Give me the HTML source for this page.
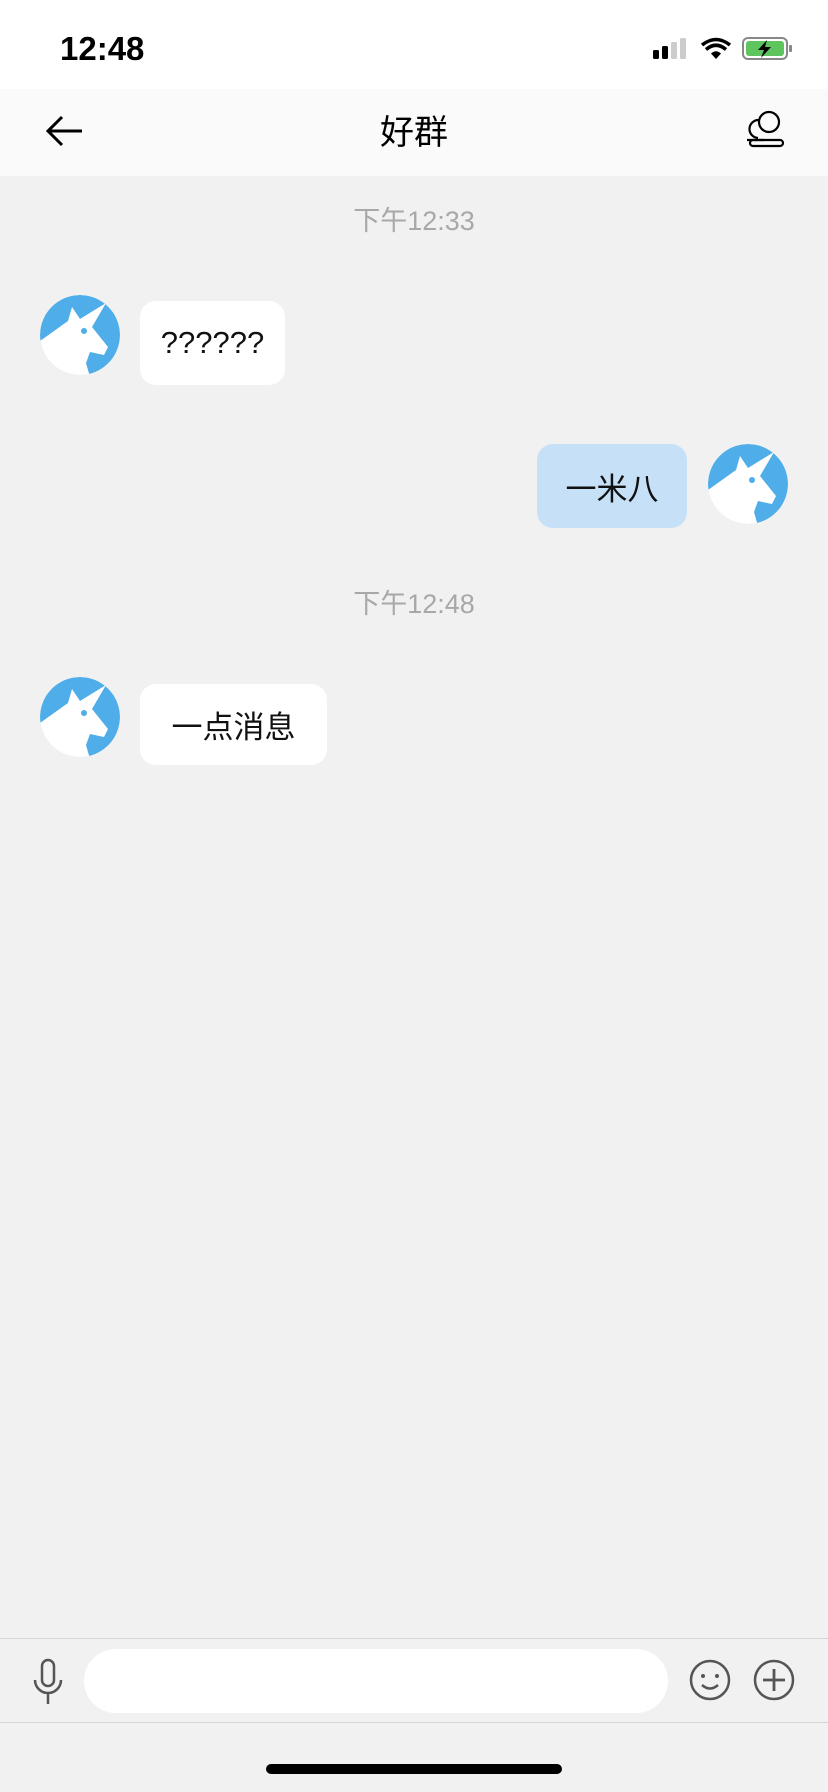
<!DOCTYPE html>
<html><head><meta charset="utf-8"><style>
*{margin:0;padding:0;box-sizing:border-box}
body{width:828px;height:1792px;background:#f1f1f1;font-family:"Liberation Sans","Noto Sans CJK SC",sans-serif;position:relative;overflow:hidden}
.abs{position:absolute}
.status{left:0;top:0;width:828px;height:89px;background:#fff}
.hdr{left:0;top:89px;width:828px;height:87px;background:#fafafa}
.ts{width:828px;text-align:center;color:#a8a8a8;font-size:27px;left:0}
.bub{border-radius:16px;background:#fff;font-size:31px;color:#111;display:flex;align-items:center;justify-content:center}
.av{width:80px;height:80px}
</style></head><body>
<div class="abs status"></div>
<div class="abs" style="left:60px;top:30px;font-size:33px;font-weight:bold;color:#000">12:48</div>
<svg class="abs" style="left:650px;top:36px" width="150" height="26" viewBox="0 0 150 26">
<rect x="3" y="14" width="6" height="9" rx="1.5" fill="#000"/><rect x="12" y="10" width="6" height="13" rx="1.5" fill="#000"/><rect x="21" y="6" width="6" height="17" rx="1.5" fill="#ccc"/><rect x="30" y="2" width="6" height="21" rx="1.5" fill="#ccc"/>
<path d="M52 9 Q66 -2 80 9" stroke="#000" stroke-width="3.5" fill="none"/><path d="M56 13.5 Q66 5 76 13.5" stroke="#000" stroke-width="3.5" fill="none"/><path d="M61 17.5 L66 23 L71 17.5 Q66 13 61 17.5Z" fill="#000"/>
<rect x="93" y="2" width="44" height="21" rx="5" fill="none" stroke="#888" stroke-width="2"/><rect x="96" y="5" width="38" height="15" rx="3" fill="#5ec45e"/><rect x="139" y="9" width="3" height="7" rx="1" fill="#888"/>
<path d="M117 4 L108 14 L114 14 L111 22 L121 11 L115 11Z" fill="#000"/>
</svg>
<div class="abs hdr"></div>
<svg class="abs" style="left:44px;top:114px" width="40" height="34" viewBox="0 0 40 34"><path d="M38 17 H4 M18 3 L4 17 L18 31" stroke="#000" stroke-width="3" fill="none"/></svg>
<div class="abs" style="left:0;width:828px;text-align:center;top:105px;font-size:34px;color:#000">好群</div>
<svg class="abs" style="left:744px;top:110px" width="42" height="42" viewBox="0 0 42 42"><circle cx="25" cy="12" r="10" fill="none" stroke="#000" stroke-width="2.2"/><path d="M15 10 A9 9 0 0 0 14 28" fill="none" stroke="#000" stroke-width="2.2"/><rect x="6" y="30" width="33" height="6" rx="3" fill="none" stroke="#000" stroke-width="2.2"/><path d="M3 30 H20" stroke="#000" stroke-width="2.2"/></svg>

<div class="abs ts" style="top:199px">下午12:33</div>
<svg class="abs av" style="left:40px;top:295px" viewBox="0 0 80 80"><defs><clipPath id="c"><circle cx="40" cy="40" r="40"/></clipPath></defs><g clip-path="url(#c)"><circle cx="40" cy="40" r="40" fill="#4faee9"/><path d="M0 46 L28 26 L32 12 L40 24 L66 8 L52 32 L68 52 L64 60 L50 57 L46 68 L50 82 L0 82Z" fill="#fff"/><circle cx="44" cy="36" r="3" fill="#4faee9"/></g></svg>
<div class="abs bub" style="left:140px;top:301px;width:145px;height:84px">??????</div>

<div class="abs bub" style="left:537px;top:444px;width:150px;height:84px;background:#c6e0f7">一米八</div>
<svg class="abs av" style="left:708px;top:444px" viewBox="0 0 80 80"><g clip-path="url(#c)"><circle cx="40" cy="40" r="40" fill="#4faee9"/><path d="M0 46 L28 26 L32 12 L40 24 L66 8 L52 32 L68 52 L64 60 L50 57 L46 68 L50 82 L0 82Z" fill="#fff"/><circle cx="44" cy="36" r="3" fill="#4faee9"/></g></svg>

<div class="abs ts" style="top:582px">下午12:48</div>
<svg class="abs av" style="left:40px;top:677px" viewBox="0 0 80 80"><g clip-path="url(#c)"><circle cx="40" cy="40" r="40" fill="#4faee9"/><path d="M0 46 L28 26 L32 12 L40 24 L66 8 L52 32 L68 52 L64 60 L50 57 L46 68 L50 82 L0 82Z" fill="#fff"/><circle cx="44" cy="36" r="3" fill="#4faee9"/></g></svg>
<div class="abs bub" style="left:140px;top:684px;width:187px;height:81px">一点消息</div>

<div class="abs" style="left:0;top:1638px;width:828px;height:1px;background:#d6d6d6"></div>
<div class="abs" style="left:84px;top:1649px;width:584px;height:64px;border-radius:32px;background:#fff"></div>
<div class="abs" style="left:0;top:1722px;width:828px;height:1px;background:#d6d6d6"></div>
<svg class="abs" style="left:28px;top:1658px" width="40" height="48" viewBox="0 0 40 48"><rect x="14" y="2" width="12" height="26" rx="6" fill="none" stroke="#555" stroke-width="2.5"/><path d="M7 22 A13 13 0 0 0 33 22 M20 35 V46" fill="none" stroke="#555" stroke-width="2.5"/></svg>
<svg class="abs" style="left:688px;top:1658px" width="44" height="44" viewBox="0 0 44 44"><circle cx="22" cy="22" r="19" fill="none" stroke="#555" stroke-width="2.5"/><circle cx="15" cy="18" r="2" fill="#555"/><circle cx="29" cy="18" r="2" fill="#555"/><path d="M14 27 Q22 34 30 27" fill="none" stroke="#555" stroke-width="2.5"/></svg>
<svg class="abs" style="left:752px;top:1658px" width="44" height="44" viewBox="0 0 44 44"><circle cx="22" cy="22" r="19" fill="none" stroke="#555" stroke-width="2.5"/><path d="M22 11 V33 M11 22 H33" stroke="#555" stroke-width="2.8"/></svg>
<div class="abs" style="left:266px;top:1764px;width:296px;height:10px;border-radius:5px;background:#000"></div>
</body></html>
